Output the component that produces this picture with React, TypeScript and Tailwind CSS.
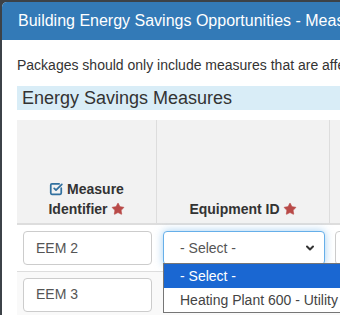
import React from 'react';
import { SquareCheckBig, Star, ChevronDown } from 'lucide-react';

const font = { fontFamily: '"Liberation Sans", Arial, sans-serif' };

// Rótulo obligatorio con estrella roja
const Required: React.FC = () => (
  <Star className="inline-block w-[14px] h-[14px] ml-[3px] -mt-[3px] text-[#b94a48]" fill="#b94a48" strokeWidth={1} />
);

const TextInput: React.FC<{ value: string }> = ({ value }) => (
  <div className="h-[34px] w-full rounded-[4px] border border-[#ccc] bg-white px-[12px] flex items-center text-[14px] text-[#555]">
    {value}
  </div>
);

export default function App() {
  return (
    <div style={font} className="w-[340px] h-[315px] overflow-hidden bg-[#3c4248] pl-[2px] pt-[2px]">
      <div className="w-[420px] h-[400px] bg-white rounded-tl-[5px] overflow-hidden">
        <div className="h-[38px] bg-[#337ab7] text-white text-[16px] flex items-center pl-[16px] whitespace-nowrap">
          Building Energy Savings Opportunities - Measures
        </div>

        <div className="px-[15px] pt-[15px]">
          <p className="text-[14px] leading-[20px] text-[#333] whitespace-nowrap">
            Packages should only include measures that are affecting the building
          </p>

          <div className="mt-[11px] h-[24px] bg-[#d9edf7] pl-[5px] flex items-center text-[18px] text-[#333] whitespace-nowrap">
            Energy Savings Measures
          </div>

          <div className="mt-[10px] text-[14px]">
            {/* encabezado */}
            <div className="flex h-[105px] bg-[#f2f2f2] border-b-2 border-[#ddd] font-bold text-[#333] leading-[20px]">
              <div className="w-[140px] shrink-0 border-r border-[#ddd] flex items-end justify-center text-center pb-[4px]">
                <div>
                  <SquareCheckBig className="inline-block w-[14px] h-[14px] -mt-[3px] mr-[4px] text-[#31709f]" strokeWidth={3} />
                  Measure
                  <br />
                  Identifier
                  <Required />
                </div>
              </div>
              <div className="w-[173px] shrink-0 border-r border-[#ddd] flex items-end justify-center pb-[4px]">
                <div>
                  Equipment ID
                  <Required />
                </div>
              </div>
              <div className="flex-1" />
            </div>

            {/* fila 1 */}
            <div className="relative flex h-[46px] items-center bg-white">
              <div className="w-[140px] shrink-0 px-[5px] pl-[6px]">
                <TextInput value="EEM 2" />
              </div>
              <div className="w-[173px] shrink-0 pl-[6px] pr-[5px]">
                <div className="h-[34px] rounded-[4px] border border-[#66afe9] shadow-[0_0_8px_rgba(102,175,233,0.6)] bg-white pl-[16px] pr-[8px] flex items-center justify-between text-[14px] text-[#555]">
                  - Select -
                  <ChevronDown className="w-[12px] h-[12px] text-[#333]" strokeWidth={4} />
                </div>
              </div>
              <div className="w-[60px] shrink-0 pl-[5px]">
                <div className="h-[34px] rounded-[4px] border border-[#ccc] bg-white" />
              </div>

              {/* lista desplegada */}
              <div className="absolute left-[146px] top-[38px] w-[200px] border border-[#767676] bg-white text-[14px] z-10">
                <div className="h-[24px] bg-[#1a67d2] text-white pl-[16px] flex items-center">- Select -</div>
                <div className="h-[24px] text-[#444] pl-[16px] flex items-center whitespace-nowrap">
                  Heating Plant 600 - Utility Meter
                </div>
              </div>
            </div>

            {/* fila 2 */}
            <div className="flex h-[46px] items-center bg-[#f9f9f9] border-t border-[#ddd]">
              <div className="w-[140px] shrink-0 px-[5px] pl-[6px]">
                <TextInput value="EEM 3" />
              </div>
            </div>
          </div>
        </div>
      </div>
    </div>
  );
}
